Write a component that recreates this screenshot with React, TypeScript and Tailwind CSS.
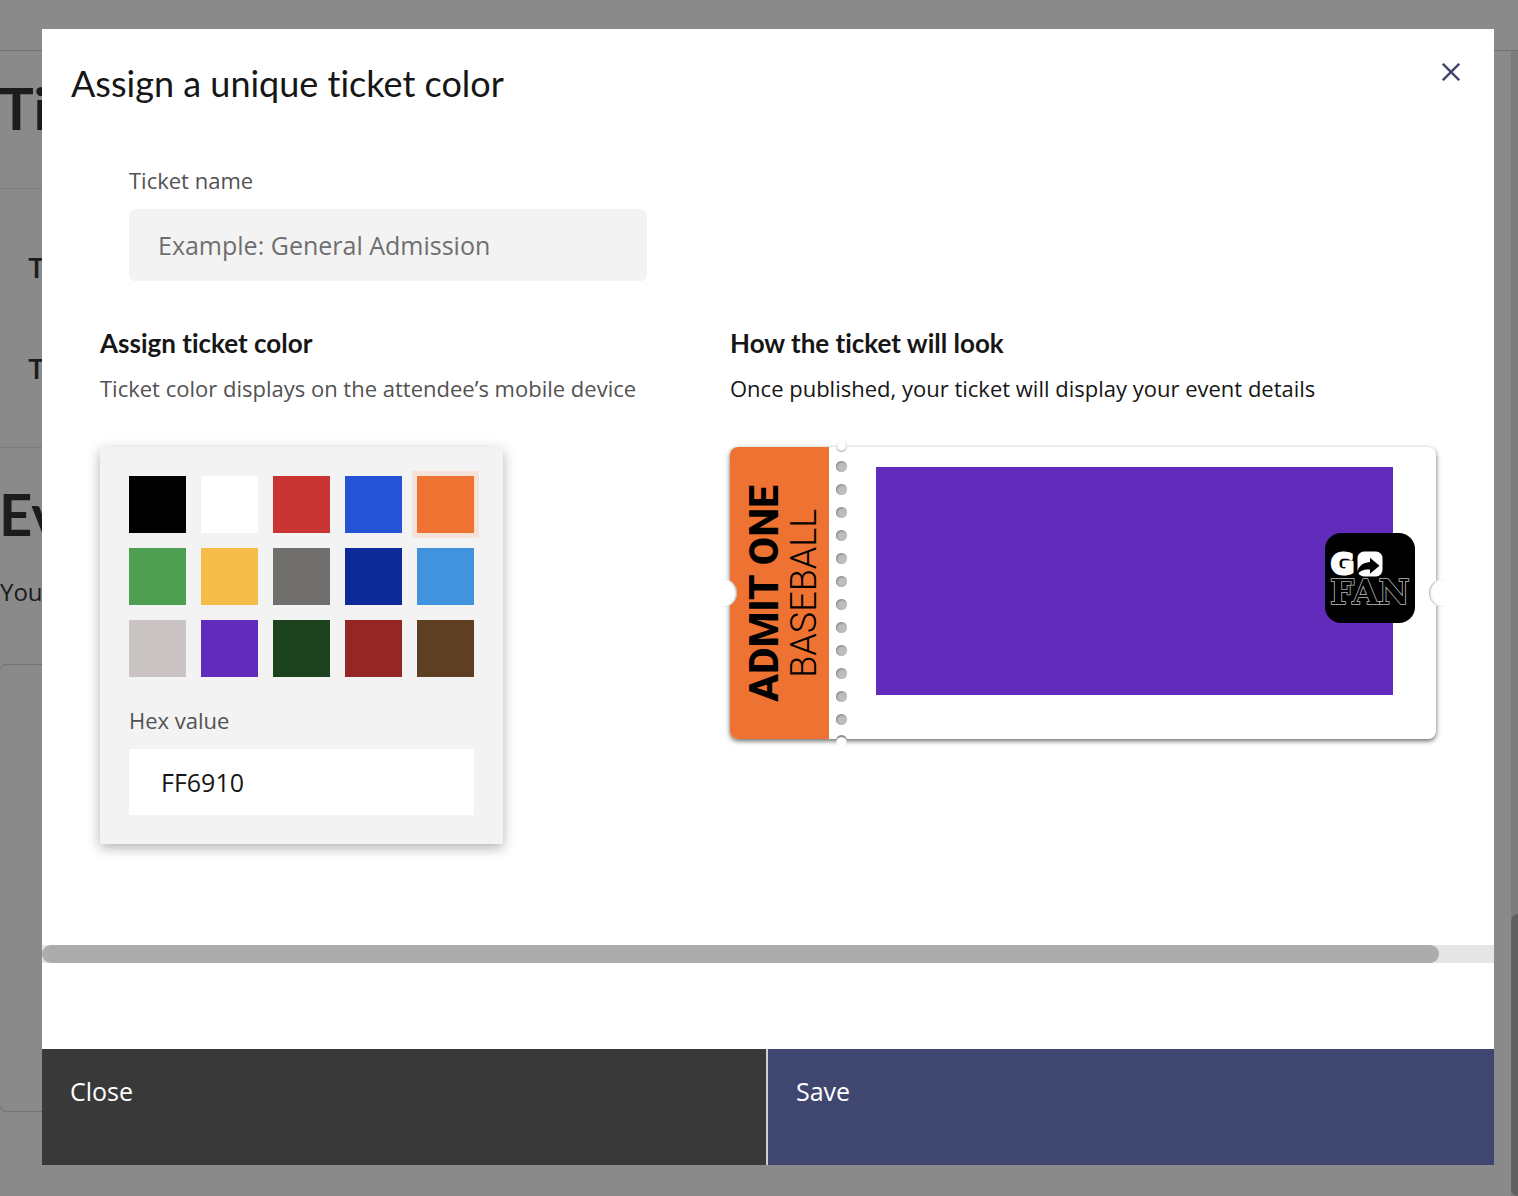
import { useState } from "react";

const swatches = [
  { name: "Black", shade: "#000000" },
  { name: "White", shade: "#ffffff" },
  { name: "Red", shade: "#c93533" },
  { name: "Blue", shade: "#2553d5" },
  { name: "Orange", shade: "#ee7231" },
  { name: "Green", shade: "#4e9f51" },
  { name: "Yellow", shade: "#f5bc4a" },
  { name: "Gray", shade: "#71706e" },
  { name: "Navy", shade: "#0e2a99" },
  { name: "Sky blue", shade: "#4192df" },
  { name: "Silver", shade: "#cac5c4" },
  { name: "Purple", shade: "#612cbb" },
  { name: "Forest", shade: "#1d421e" },
  { name: "Maroon", shade: "#942726" },
  { name: "Brown", shade: "#5e3f21" },
];

function GoFanLogo() {
  return (
    <svg viewBox="0 0 90 90" className="size-[90px]" role="img" aria-label="GoFan">
      <rect width="90" height="90" rx="16" fill="#000" />
      <text
        x="6"
        y="41"
        fontFamily="DejaVu Sans"
        fontWeight="700"
        fontSize="28"
        fill="#fff"
        stroke="#fff"
        strokeWidth="3"
        strokeLinejoin="round"
      >
        G
      </text>
      <rect x="32.500" y="18.500" width="25" height="25" rx="6.500" fill="#fff" />
      <path
        d="M31.500 42c1-7.500 5-12.500 13.500-13v-4.300l9.500 8-9.500 8v-4.200c-6-.5-9.500 1-13.500 5.500z"
        fill="#000"
      />
      <text
        x="5"
        y="71"
        fontFamily="DejaVu Serif"
        fontWeight="700"
        fontSize="34"
        fill="#000"
        stroke="#b8b8b8"
        strokeWidth="1.600"
        paintOrder="stroke"
      >
        FAN
      </text>
    </svg>
  );
}

function Ticket({ shade }: { shade: string }) {
  return (
    <div className="relative flex h-[292px] rounded-lg bg-white shadow-[0_2px_5px_rgba(0,0,0,0.6)]">
      <div
        className="flex w-[99px] shrink-0 items-center justify-center rounded-l-lg pl-2 font-[Roboto] leading-10 text-black"
        style={{ backgroundColor: shade }}
      >
        <div className="rotate-180 text-center whitespace-nowrap [writing-mode:vertical-rl]">
          <p className="text-[41px] font-extrabold">ADMIT ONE</p>
          <p className="text-[36px] font-light">BASEBALL</p>
        </div>
      </div>
      <div className="flex w-6 shrink-0 flex-col items-center gap-3 py-3.5">
        {Array.from({ length: 12 }, (_, i) => (
          <span
            key={i}
            className="size-[11px] rounded-full bg-[#bdbdbd] shadow-[inset_1px_1px_2px_#888]"
          />
        ))}
      </div>
      <div className="mt-5 mr-[43px] mb-11 ml-[23px] flex-1 bg-[#612cbb]" />
      <div className="absolute top-[86px] right-[21px]">
        <GoFanLogo />
      </div>
      <span className="absolute -top-[6px] left-[106px] size-[11px] rounded-full bg-white shadow-[inset_0_-1px_2px_#aaa]" />
      <span className="absolute -bottom-[7px] left-[106px] size-[11px] rounded-full bg-white shadow-[inset_0_2px_1px_#888]" />
      <span className="absolute top-[132px] -left-[21px] size-7 rounded-full bg-white shadow-[inset_-2px_0_2px_-1px_#aaa]" />
      <span className="absolute top-[132px] -right-[21px] size-7 rounded-full bg-white shadow-[inset_2px_0_2px_-1px_#aaa]" />
    </div>
  );
}

function PageBehind() {
  return (
    <div className="flex min-h-screen flex-col bg-[#8a8a8a] text-[#1c1c1c]" aria-hidden="true">
      <div className="h-[51px] border-b border-[#727272]" />
      <div className="flex flex-1">
        <div className="flex-1 overflow-hidden pr-10">
          <section className="h-[138px] border-b border-[#7c7c7c] pt-[21px]">
            <h1 className="-ml-px font-[Lato] text-[58px] leading-[72px] font-bold">Ti</h1>
          </section>
          <section className="flex h-[259px] flex-col gap-[61px] border-b border-[#7c7c7c] pt-[60px] pl-7 font-[Roboto] text-[28px] leading-10 font-medium">
            <p>T</p>
            <p>T</p>
          </section>
          <section className="pt-[30px]">
            <h2 className="-ml-px font-[Lato] text-[58px] leading-[72px] font-bold">Ev</h2>
            <p className="pt-[26px] font-['Open_Sans'] text-2xl leading-8">You</p>
            <div className="mt-14 -ml-px h-[448px] rounded-lg border border-[#727272]" />
          </section>
        </div>
        <div className="flex w-[7px] flex-col bg-[#7d7d7d]">
          <div className="mt-[863px] flex-1 rounded-l-lg bg-[#606060]" />
        </div>
      </div>
    </div>
  );
}

export default function App() {
  const [selected, setSelected] = useState("Orange");
  const [hex, setHex] = useState("FF6910");
  const shade = swatches.find((s) => s.name === selected)?.shade ?? "#ee7231";

  const pick = (name: string, value: string) => {
    setSelected(name);
    setHex(value.slice(1).toUpperCase());
  };

  return (
    <div className="h-screen overflow-hidden [font-variant-ligatures:none]">
      <PageBehind />
      <div className="fixed inset-0 flex pt-[29px] pr-6 pb-[31px] pl-[42px]">
        <div
          role="dialog"
          aria-labelledby="dialog-title"
          className="flex flex-1 flex-col bg-white font-['Open_Sans',sans-serif] text-[#161616]"
        >
          <header className="flex items-start justify-between px-[29px] pt-[27px]">
            <h2 id="dialog-title" className="font-[Lato] text-[36px] leading-[54px]">
              Assign a unique ticket color
            </h2>
            <button type="button" aria-label="Close dialog" className="mt-0.5 p-[5px]">
              <svg viewBox="0 0 18 18" className="size-[18px]" fill="none" stroke="#3f456e" strokeWidth="2.400">
                <path d="M.8.8l16.400 16.400M17.200.8L.8 17.200" />
              </svg>
            </button>
          </header>

          <div className="flex-1 px-[58px] pt-14">
            <div className="flex max-w-[547px] flex-col pl-[29px]">
              <label htmlFor="ticket-name" className="text-[22px] leading-7 text-[#525252]">
                Ticket name
              </label>
              <input
                id="ticket-name"
                placeholder="Example: General Admission"
                className="mt-[15px] h-18 rounded-md bg-[#f3f3f3] px-[29px] text-[25px] placeholder:text-[#6f6f6f]"
              />
            </div>

            <div className="mt-[46px] grid grid-cols-[630fr_706fr]">
              <section>
                <h3 className="font-[Lato] text-[26px] leading-8 font-bold">Assign ticket color</h3>
                <p className="mt-[15px] text-[22px] leading-7 whitespace-nowrap text-[#525252]">
                  Ticket color displays on the attendee’s mobile device
                </p>
                <div className="mt-[45px] w-[403px] bg-[#f3f3f3] p-[29px] shadow-[0_4px_12px_rgba(0,0,0,0.3)]">
                  <div role="radiogroup" aria-label="Ticket color" className="grid grid-cols-5 gap-[15px]">
                    {swatches.map((s) => (
                      <input
                        key={s.name}
                        type="radio"
                        name="ticket-color"
                        aria-label={s.name}
                        checked={selected === s.name}
                        onChange={() => pick(s.name, s.shade)}
                        className="size-[57px] appearance-none checked:shadow-[0_0_0_5px_#f5e2d9]"
                        style={{ backgroundColor: s.shade }}
                      />
                    ))}
                  </div>
                  <label htmlFor="hex-value" className="mt-[29px] block text-[22px] leading-7 text-[#525252]">
                    Hex value
                  </label>
                  <input
                    id="hex-value"
                    value={hex}
                    onChange={(e) => setHex(e.target.value)}
                    className="mt-[15px] h-[66px] w-full bg-white px-8 text-[25px]"
                  />
                </div>
              </section>

              <section>
                <h3 className="font-[Lato] text-[26px] leading-8 font-bold">How the ticket will look</h3>
                <p className="mt-[15px] mb-[45px] text-[22px] leading-7 whitespace-nowrap">
                  Once published, your ticket will display your event details
                </p>
                <Ticket shade={shade} />
              </section>
            </div>
          </div>

          <div className="mb-[86px] h-[18px] bg-[#e5e5e5]">
            <div className="h-full w-[96.2%] rounded-full bg-[#acacac]" />
          </div>

          <footer className="grid h-[116px] grid-cols-2 text-[25px] leading-8 text-white">
            <button type="button" className="flex border-r-2 border-[#d0d0d0] bg-[#393939] px-7 pt-[26px]">
              Close
            </button>
            <button type="button" className="flex bg-[#3f466f] px-7 pt-[26px]">
              Save
            </button>
          </footer>
        </div>
      </div>
    </div>
  );
}
